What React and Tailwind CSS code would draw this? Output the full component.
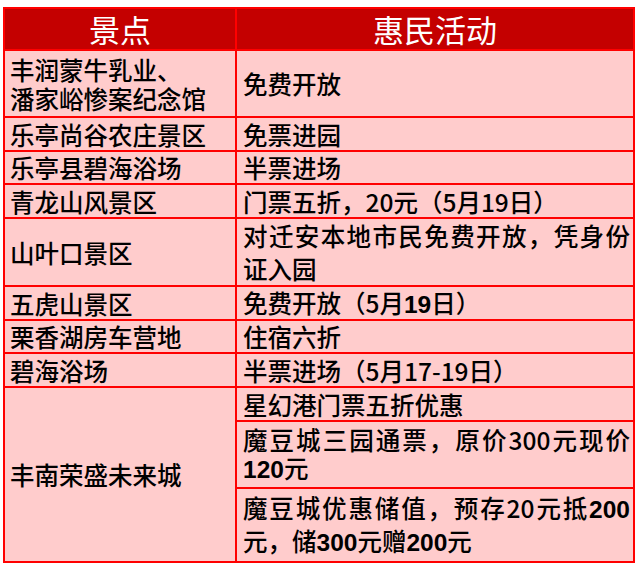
const cjk = { fontFamily: '"Noto Sans CJK SC", "Noto Sans", sans-serif' };

const B = ({ children }) => (
  <span className="font-bold" style={{ fontFamily: '"Liberation Sans", Arial, sans-serif' }}>
    {children}
  </span>
);

// a wrapped line that is spread to the full cell width
const Spread = ({ children }) => (
  <div className="text-justify [text-align-last:justify]">{children}</div>
);

const rows = [
  { h: 'h-[67px]', place: <><div>丰润蒙牛乳业、</div><div>潘家峪惨案纪念馆</div></>, act: '免费开放' },
  { h: 'h-[34px]', place: '乐亭尚谷农庄景区', act: '免票进园' },
  { h: 'h-[33px]', place: '乐亭县碧海浴场', act: '半票进场' },
  { h: 'h-[34px]', place: '青龙山风景区', act: '门票五折，20元（5月19日）' },
  {
    h: 'h-[66px]',
    place: '山叶口景区',
    act: <div className="leading-[33px]"><Spread>对迁安本地市民免费开放，凭身份</Spread><div>证入园</div></div>,
  },
  { h: 'h-[34px]', place: '五虎山景区', act: <>免费开放（5月<B>19</B>日）</> },
  { h: 'h-[33px]', place: '栗香湖房车营地', act: '住宿六折' },
  { h: 'h-[34px]', place: '碧海浴场', act: '半票进场（5月17-19日）' },
];

export default function App() {
  return (
    <div className="w-[640px] h-[575px] bg-white pt-[7px] pl-[3px]" style={cjk}>
      <table className="w-[630px] table-fixed border-collapse border-2 border-[#ff0000] text-[24.5px] leading-[29px] text-black font-medium">
        <colgroup>
          <col className="w-[232px]" />
          <col className="w-[398px]" />
        </colgroup>
        <thead>
          <tr className="h-[42px] bg-[#c40000] text-white text-[31px] leading-[34px] font-normal">
            <th className="border-2 border-[#ff0000] font-normal">景点</th>
            <th className="border-2 border-[#ff0000] font-normal">惠民活动</th>
          </tr>
        </thead>
        <tbody className="bg-[#ffcccc]">
          {rows.map((r, i) => (
            <tr key={i} className={r.h}>
              <td className="border-2 border-[#ff0000] pl-[5px] pr-1 align-middle">{r.place}</td>
              <td className="border-2 border-[#ff0000] pl-[6px] pr-[3px] align-middle">{r.act}</td>
            </tr>
          ))}
          <tr className="h-[34px]">
            <td rowSpan={3} className="border-2 border-[#ff0000] pl-[5px] pr-1 align-middle">丰南荣盛未来城</td>
            <td className="border-2 border-[#ff0000] pl-[6px] pr-[3px] align-middle">星幻港门票五折优惠</td>
          </tr>
          <tr className="h-[67px]">
            <td className="border-2 border-[#ff0000] pl-[6px] pr-[3px] align-middle leading-[28px]">
              <Spread>魔豆城三园通票，原价300元现价</Spread>
              <div><B>120</B>元</div>
            </td>
          </tr>
          <tr className="h-[74px]">
            <td className="border-2 border-[#ff0000] pl-[6px] pr-[3px] align-middle leading-[31px]">
              <Spread>魔豆城优惠储值，预存20元抵<B>200</B></Spread>
              <div>元，储<B>300</B>元赠<B>200</B>元</div>
            </td>
          </tr>
        </tbody>
      </table>
    </div>
  );
}
